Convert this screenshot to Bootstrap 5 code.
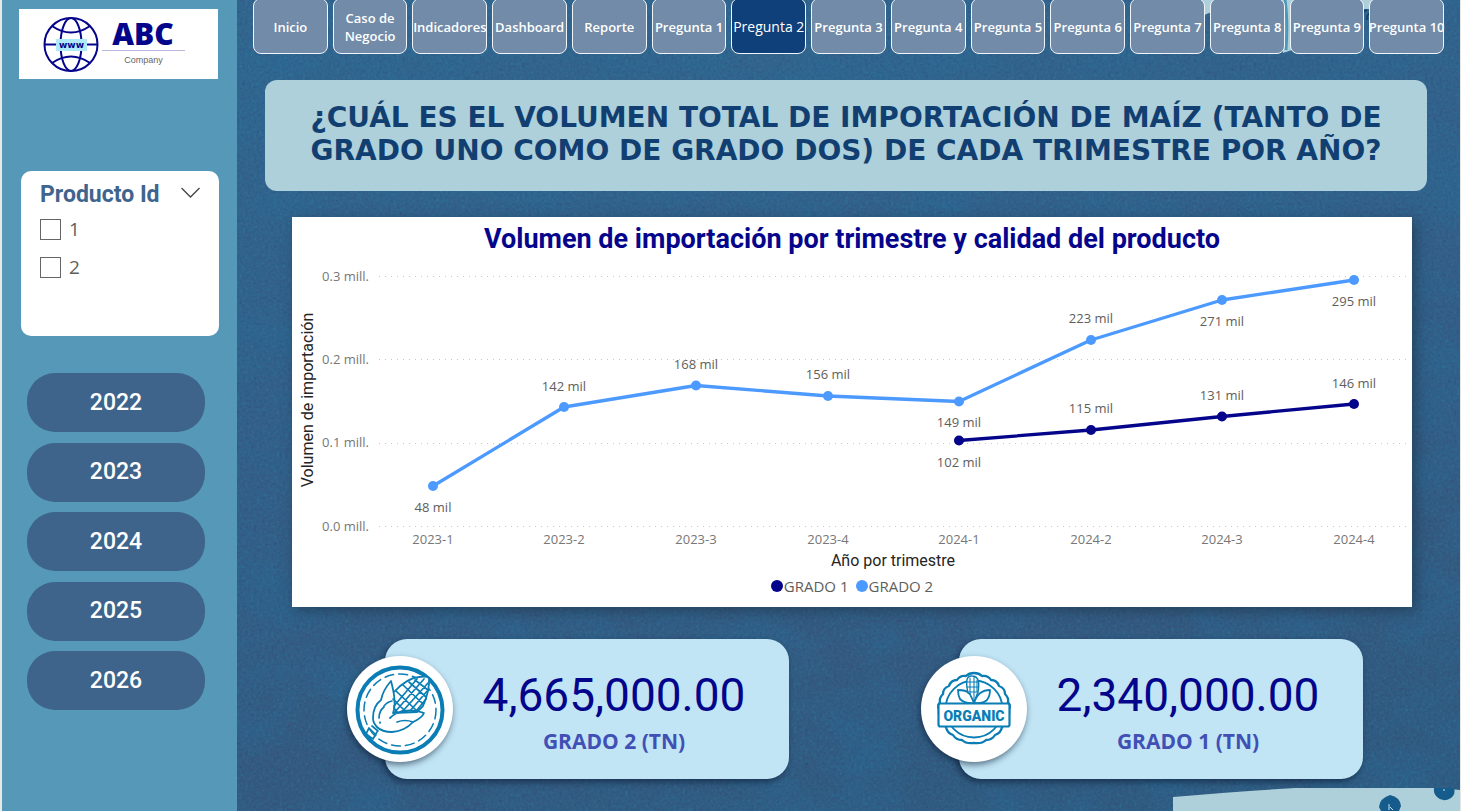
<!DOCTYPE html>
<html lang="es">
<head>
<meta charset="utf-8">
<meta name="viewport" content="width=device-width, initial-scale=1">
<title>Pregunta 2 - ABC Company</title>
<link rel="stylesheet" href="https://cdn.jsdelivr.net/npm/bootstrap@5.3.0/dist/css/bootstrap.min.css">
<style>
:root { --seg: "Open Sans", "Noto Sans", sans-serif; --din: Roboto, "Liberation Sans", sans-serif; }
body { font-family: var(--seg); background: #315d88; }
.shell { border-left: 2px solid #e8e8e6; border-right: 1px solid #e8e8e6; }
.side { flex: 0 0 235px; background: #5598b7; padding: 9px 19px 0 17px; }
.logo-box { background: #fff; height: 70px; margin-bottom: 92px; }
.logo-box svg { display: block; width: 100%; height: 100%; }
.slicer { border-radius: 10px; height: 165px; padding: 9px 19px; margin: 0 -1px 37px 2px; }
.slicer-title { font: 700 23px/30px var(--din); color: #3f648d; margin: 0; }
.slicer-toggle { border: 0; background: none; padding: 0; line-height: 1; margin-bottom: 8px; }
.slicer .form-check { margin: 0; min-height: 38px; padding-left: 30px; display: flex; align-items: center; }
.slicer .form-check-input { width: 21px; height: 21px; margin: 0 8px 0 -30px; border: 1px solid #666; border-radius: 0; }
.slicer label { font-size: 19px; color: #605e5c; line-height: 30px; }
.year-btn { height: 59px; border-radius: 28px; background: #3f648b; color: #fff; border: 0; font: 500 23px/30px var(--din); }
.years { min-height: 337px; padding: 0 13px 0 8px; }
.stage { isolation: isolate; min-width: 0; background: linear-gradient(170deg, #33658f, #345f8a 35%, #36577e 75%, #30587e); }
.grain { inset: 0; z-index: -1; overflow: hidden; }
.tabs-bar { gap: 5px; padding: 0 16px; margin-top: -2px; }
.tab-btn { flex: 1 1 0; min-width: 0; height: 56px; padding: 2px 0 0; border: 1px solid #f1f4f8; border-radius: 8px; background: #718ba8; color: #fff; font-size: 13px; font-weight: 600; line-height: 18px; display: flex; align-items: center; justify-content: center; text-align: center; }
.tab-btn span { flex: none; }
.tab-btn.wrap span { flex: 0 1 60px; }
.tab-btn.active { background: #10407a; font-size: 14px; font-weight: 400; }
.banner { margin: 26px 33px 0 28px; min-height: 111px; padding: 16px 40px 20px; border-radius: 12px; background: #aed0da; }
.banner h1 { font: 700 28px/33px "DejaVu Sans", sans-serif; color: #123f72; margin: 0; text-align: center; }
.plot { margin: 26px 48px 0 55px; background: #fff; box-shadow: 4px 4px 12px rgba(30, 50, 70, .6); padding-bottom: 9px; }
.plot h2 { font: 700 27px/45px var(--din); color: #05058c; margin: 0; text-align: center; }
.plot svg { display: block; width: 100%; height: auto; }
.legend-row { font-size: 15px; line-height: 24px; color: #605e5c; gap: 7px; }
.dot { width: 12px; height: 12px; border-radius: 50%; display: inline-block; margin-right: 1px; }
.kpis { gap: 132px; padding: 32px 97px 0 110px; }
.kpi { flex: 1; padding-left: 38px; }
.kpi-card { height: 140px; border-radius: 22px; background: #c1e5f5; box-shadow: -2px 3px 6px rgba(10, 25, 50, .6); padding: 28px 0 0 54px; text-align: center; }
.kpi-num { font: 400 46px/56px var(--din); color: #05058c; }
.kpi-name { font-size: 21px; font-weight: 700; line-height: 36px; color: #4150b5; }
.kpi-icon { left: 0; top: 17px; width: 106px; height: 106px; border-radius: 50%; background: #fff; box-shadow: -1px 3px 6px rgba(10, 25, 50, .55); }
.corner-top { right: 60px; top: 0; z-index: -1; }
.corner-bottom { right: 0; bottom: 0; z-index: -1; }
</style>
</head>
<body>
<div class="shell d-flex min-vh-100">
  <aside class="side">
    <div class="logo-box">
      <svg viewBox="0 0 199 70" role="img" aria-label="ABC Company">
        <g fill="none" stroke="#05058c" stroke-width="2">
          <circle cx="52" cy="35.500" r="26.500"/>
          <ellipse cx="52" cy="35.500" rx="10.500" ry="26.500"/>
          <path d="M25.500 35.500H79M33 17q19 13 38 0M33 54q19-13 38 0"/>
        </g>
        <rect x="37" y="30" width="31" height="12" fill="#aeeaf9"/>
        <text x="52.500" y="39" text-anchor="middle" font-family="DejaVu Sans" font-weight="700" font-size="9" fill="#05058c">www</text>
        <text x="124" y="36" text-anchor="middle" font-family="Open Sans" font-weight="800" font-size="30" fill="#05058c">ABC</text>
        <path d="M83 41.500h83" stroke="#b9b6df"/>
        <text x="124.500" y="54" text-anchor="middle" font-family="Liberation Sans" font-size="9" fill="#666">Company</text>
      </svg>
    </div>
    <section class="slicer bg-white">
      <div class="d-flex justify-content-between align-items-center">
        <h2 class="slicer-title">Producto Id</h2>
        <button class="slicer-toggle" type="button" aria-label="Desplegar">
          <svg width="19" height="11" viewBox="0 0 19 11" fill="none" stroke="#444" stroke-width="1.300"><path d="M.5 1l9 9 9-9"/></svg>
        </button>
      </div>
      <div class="form-check"><input class="form-check-input" type="checkbox" id="p1"><label for="p1">1</label></div>
      <div class="form-check"><input class="form-check-input" type="checkbox" id="p2"><label for="p2">2</label></div>
    </section>
    <div class="years d-flex flex-column justify-content-between">
      <button class="year-btn" type="button">2022</button>
      <button class="year-btn" type="button">2023</button>
      <button class="year-btn" type="button">2024</button>
      <button class="year-btn" type="button">2025</button>
      <button class="year-btn" type="button">2026</button>
    </div>
  </aside>

  <main class="stage flex-grow-1 position-relative">
    <svg class="grain position-absolute w-100 h-100" aria-hidden="true">
      <filter id="noise" x="0" y="0" width="100%" height="100%" color-interpolation-filters="sRGB">
        <feTurbulence type="fractalNoise" baseFrequency=".35" numOctaves="3" seed="4"/>
        <feColorMatrix values="0 0 0 0 .16  .5 0 0 0 .16  .3 0 0 0 .4  0 .6 0 0 -.1"/>
      </filter>
      <filter id="patches" x="0" y="0" width="100%" height="100%" color-interpolation-filters="sRGB">
        <feTurbulence type="fractalNoise" baseFrequency=".012 .02" numOctaves="4" seed="9"/>
        <feColorMatrix values="0 0 0 0 .15  0 0 0 0 .42  0 0 0 0 .6  1 0 0 0 -.4"/>
      </filter>
      <rect width="100%" height="100%" filter="url(#patches)"/>
      <rect width="100%" height="100%" filter="url(#noise)"/>
    </svg>
    <svg class="corner-top position-absolute" width="200" height="54" viewBox="0 0 200 54" aria-hidden="true">
      <path d="M0 0h190v9h-20l-5 0H20L4 15z" fill="#aed0da"/>
      <path d="M82 0h10v50l-9 3z" fill="#aed0da"/>
      <path d="M85 0q3 20 1 50" fill="none" stroke="#4c98b8" stroke-width="3"/>
      <path d="M163 22q-3-10 4-12M167 20q-1-6 4-7" fill="none" stroke="#123f62" stroke-width="1.500"/>
    </svg>
    <svg class="corner-bottom position-absolute" width="287" height="24" viewBox="0 0 287 24" aria-hidden="true">
      <path d="M0 10Q70 4 122 1H265L287 3V24H0z" fill="#aed0da"/>
      <path d="M206 20q1-9 11-12 10 2 11 11l-2 5h-18z" fill="#155c8c"/>
      <path d="M261 1h20q2 6-3 10-8 5-14-1-4-4-3-9z" fill="#155c8c"/>
      <path d="M216 17v6m1-3 3 3M271 2v2" stroke="#c1e5f5"/>
    </svg>

    <nav class="tabs-bar d-flex" aria-label="Páginas">
      <button class="tab-btn" type="button"><span>Inicio</span></button>
      <button class="tab-btn wrap" type="button"><span>Caso de Negocio</span></button>
      <button class="tab-btn" type="button"><span>Indicadores</span></button>
      <button class="tab-btn" type="button"><span>Dashboard</span></button>
      <button class="tab-btn" type="button"><span>Reporte</span></button>
      <button class="tab-btn" type="button"><span>Pregunta 1</span></button>
      <button class="tab-btn active" type="button" aria-current="page"><span>Pregunta 2</span></button>
      <button class="tab-btn" type="button"><span>Pregunta 3</span></button>
      <button class="tab-btn" type="button"><span>Pregunta 4</span></button>
      <button class="tab-btn" type="button"><span>Pregunta 5</span></button>
      <button class="tab-btn" type="button"><span>Pregunta 6</span></button>
      <button class="tab-btn" type="button"><span>Pregunta 7</span></button>
      <button class="tab-btn" type="button"><span>Pregunta 8</span></button>
      <button class="tab-btn" type="button"><span>Pregunta 9</span></button>
      <button class="tab-btn" type="button"><span>Pregunta 10</span></button>
    </nav>

    <header class="banner d-flex align-items-center justify-content-center">
      <h1>¿CUÁL ES EL VOLUMEN TOTAL DE IMPORTACIÓN DE MAÍZ (TANTO DE<br>GRADO UNO COMO DE GRADO DOS) DE CADA TRIMESTRE POR AÑO?</h1>
    </header>

    <section class="plot">
      <h2>Volumen de importación por trimestre y calidad del producto</h2>
      <svg viewBox="0 45 1120 312" role="img" aria-label="Volumen de importación por trimestre" font-family="Open Sans, Noto Sans, sans-serif" font-size="13">
        <g stroke="#c8c8c8" stroke-dasharray="1 5" stroke-width="1">
          <path d="M87 59.500H1115M87 142.500H1115M87 226.500H1115M87 309.500H1115"/>
        </g>
        <g fill="#777" text-anchor="end">
          <text x="77" y="64">0.3 mill.</text><text x="77" y="147">0.2 mill.</text>
          <text x="77" y="230">0.1 mill.</text><text x="77" y="314">0.0 mill.</text>
        </g>
        <g fill="#777" text-anchor="middle">
          <text x="141" y="327">2023-1</text><text x="272" y="327">2023-2</text><text x="404" y="327">2023-3</text><text x="536" y="327">2023-4</text>
          <text x="667" y="327">2024-1</text><text x="799" y="327">2024-2</text><text x="930" y="327">2024-3</text><text x="1062" y="327">2024-4</text>
        </g>
        <g fill="none" stroke-width="3.300" stroke-linejoin="round">
          <path stroke="#4c9aff" d="M141 269L272 190 404 168.500 536 179 667 184.500 799 123 930 83 1062 63"/>
          <path stroke="#05058c" d="M667 223.500L799 213 930 199.500 1062 187"/>
        </g>
        <g fill="#4c9aff">
          <circle cx="141" cy="269" r="5"/><circle cx="272" cy="190" r="5"/><circle cx="404" cy="168.500" r="5"/><circle cx="536" cy="179" r="5"/>
          <circle cx="667" cy="184.500" r="5"/><circle cx="799" cy="123" r="5"/><circle cx="930" cy="83" r="5"/><circle cx="1062" cy="63" r="5"/>
        </g>
        <g fill="#05058c">
          <circle cx="667" cy="223.500" r="5"/><circle cx="799" cy="213" r="5"/><circle cx="930" cy="199.500" r="5"/><circle cx="1062" cy="187" r="5"/>
        </g>
        <g fill="#605e5c" text-anchor="middle">
          <text x="141" y="295">48 mil</text><text x="272" y="174">142 mil</text><text x="404" y="152">168 mil</text><text x="536" y="162">156 mil</text>
          <text x="667" y="210">149 mil</text><text x="799" y="106">223 mil</text><text x="930" y="109">271 mil</text><text x="1062" y="89">295 mil</text>
          <text x="667" y="250">102 mil</text><text x="799" y="196">115 mil</text><text x="930" y="183">131 mil</text><text x="1062" y="171">146 mil</text>
        </g>
        <g fill="#252423" text-anchor="middle" font-family="Roboto" font-size="16">
          <text x="601" y="349">Año por trimestre</text>
          <text x="-183" y="21" transform="rotate(-90)">Volumen de importación</text>
        </g>
      </svg>
      <div class="legend-row d-flex justify-content-center">
        <span class="d-flex align-items-center"><i class="dot" style="background:#05058c"></i>GRADO 1</span>
        <span class="d-flex align-items-center"><i class="dot" style="background:#4c9aff"></i>GRADO 2</span>
      </div>
    </section>

    <section class="kpis d-flex">
      <div class="kpi position-relative">
        <div class="kpi-card"><div class="kpi-num">4,665,000.00</div><div class="kpi-name">GRADO 2 (TN)</div></div>
        <svg class="kpi-icon position-absolute" viewBox="0 0 106 106" fill="none" stroke="#0b7db5" stroke-linecap="round" stroke-linejoin="round" aria-hidden="true">
          <circle cx="53" cy="54" r="42.500" stroke-width="4"/>
          <circle cx="53" cy="54" r="36" stroke-width="1.500" stroke-dasharray="9 5"/>
          <path d="M47 36Q60 22 72 21 80 20 82 22 83 34 76 50L70 56 46 57Q50 47 44 25 36 34 34 44 26 50 26 62 26 67 30 71 35 76 45 76 58 75 66 66 75 62 77 57 68 53 55 55 48 57 43 62" fill="#fff" stroke-width="1.800"/>
          <path d="M49 35L70 55M56 29L76 48M62 26L79 41M68 24L81 34M46 43L59 56M47 52l4 5M47 50L70 23M47 57L77 23M55 56L81 27M63 55L81 34M70 54L79 43" stroke-width="1.700"/>
          <path d="M50 66q8-3 16 0M32 62q0-7 5-11M33 66v1M22 72l7 7M25 70l6 5M19 78l7 5 4-7M22 72l-3 6M37 50q3-4 8-5" stroke-width="1.700"/>
        </svg>
      </div>
      <div class="kpi position-relative">
        <div class="kpi-card"><div class="kpi-num">2,340,000.00</div><div class="kpi-name">GRADO 1 (TN)</div></div>
        <svg class="kpi-icon position-absolute" viewBox="0 0 106 106" fill="none" stroke="#0b7db5" stroke-linecap="round" stroke-linejoin="round" aria-hidden="true">
          <path d="M53 17q5 0 8 3 6-1 9 4 6 0 8 6 6 2 6 8 4 4 3 8 3 4 1 8 1 5-2 8 0 6-5 9-1 6-7 8-3 5-9 5-4 4-12 3-8 1-12-3-6 0-9-5-6-2-7-8-5-3-5-9-3-3-2-8-2-4 1-8-1-4 3-8 0-6 6-8 2-6 8-6 3-5 9-4 3-3 8-3z" stroke-width="2.300"/>
          <circle cx="53" cy="53" r="28.500" stroke-width="1.800"/>
          <path d="M53 47Q44 48 39 43 37 39 37 34 46 34 49 38L53 47Q57 34 69 34 69 40 66 44 62 48 53 47z" fill="#fff" stroke-width="1.800"/>
          <path d="M47 37Q43 19 51 20 60 20 57 36L53 46 49 38z" fill="#fff" stroke-width="1.400"/>
          <path d="M49 22v16M53 21v23M56 24v12M46 26h11M46 31h11M47 36h10" stroke-width="1.100"/>
          <rect x="17.500" y="47.500" width="71" height="23" rx="2" fill="#fff" stroke-width="2.200"/>
          <text x="53" y="65" text-anchor="middle" font-family="Roboto" font-weight="900" font-size="14" fill="#0b7db5" stroke="none">ORGANIC</text>
        </svg>
      </div>
    </section>
  </main>
</div>
<script src="https://cdn.jsdelivr.net/npm/bootstrap@5.3.0/dist/js/bootstrap.bundle.min.js"></script>
</body>
</html>
